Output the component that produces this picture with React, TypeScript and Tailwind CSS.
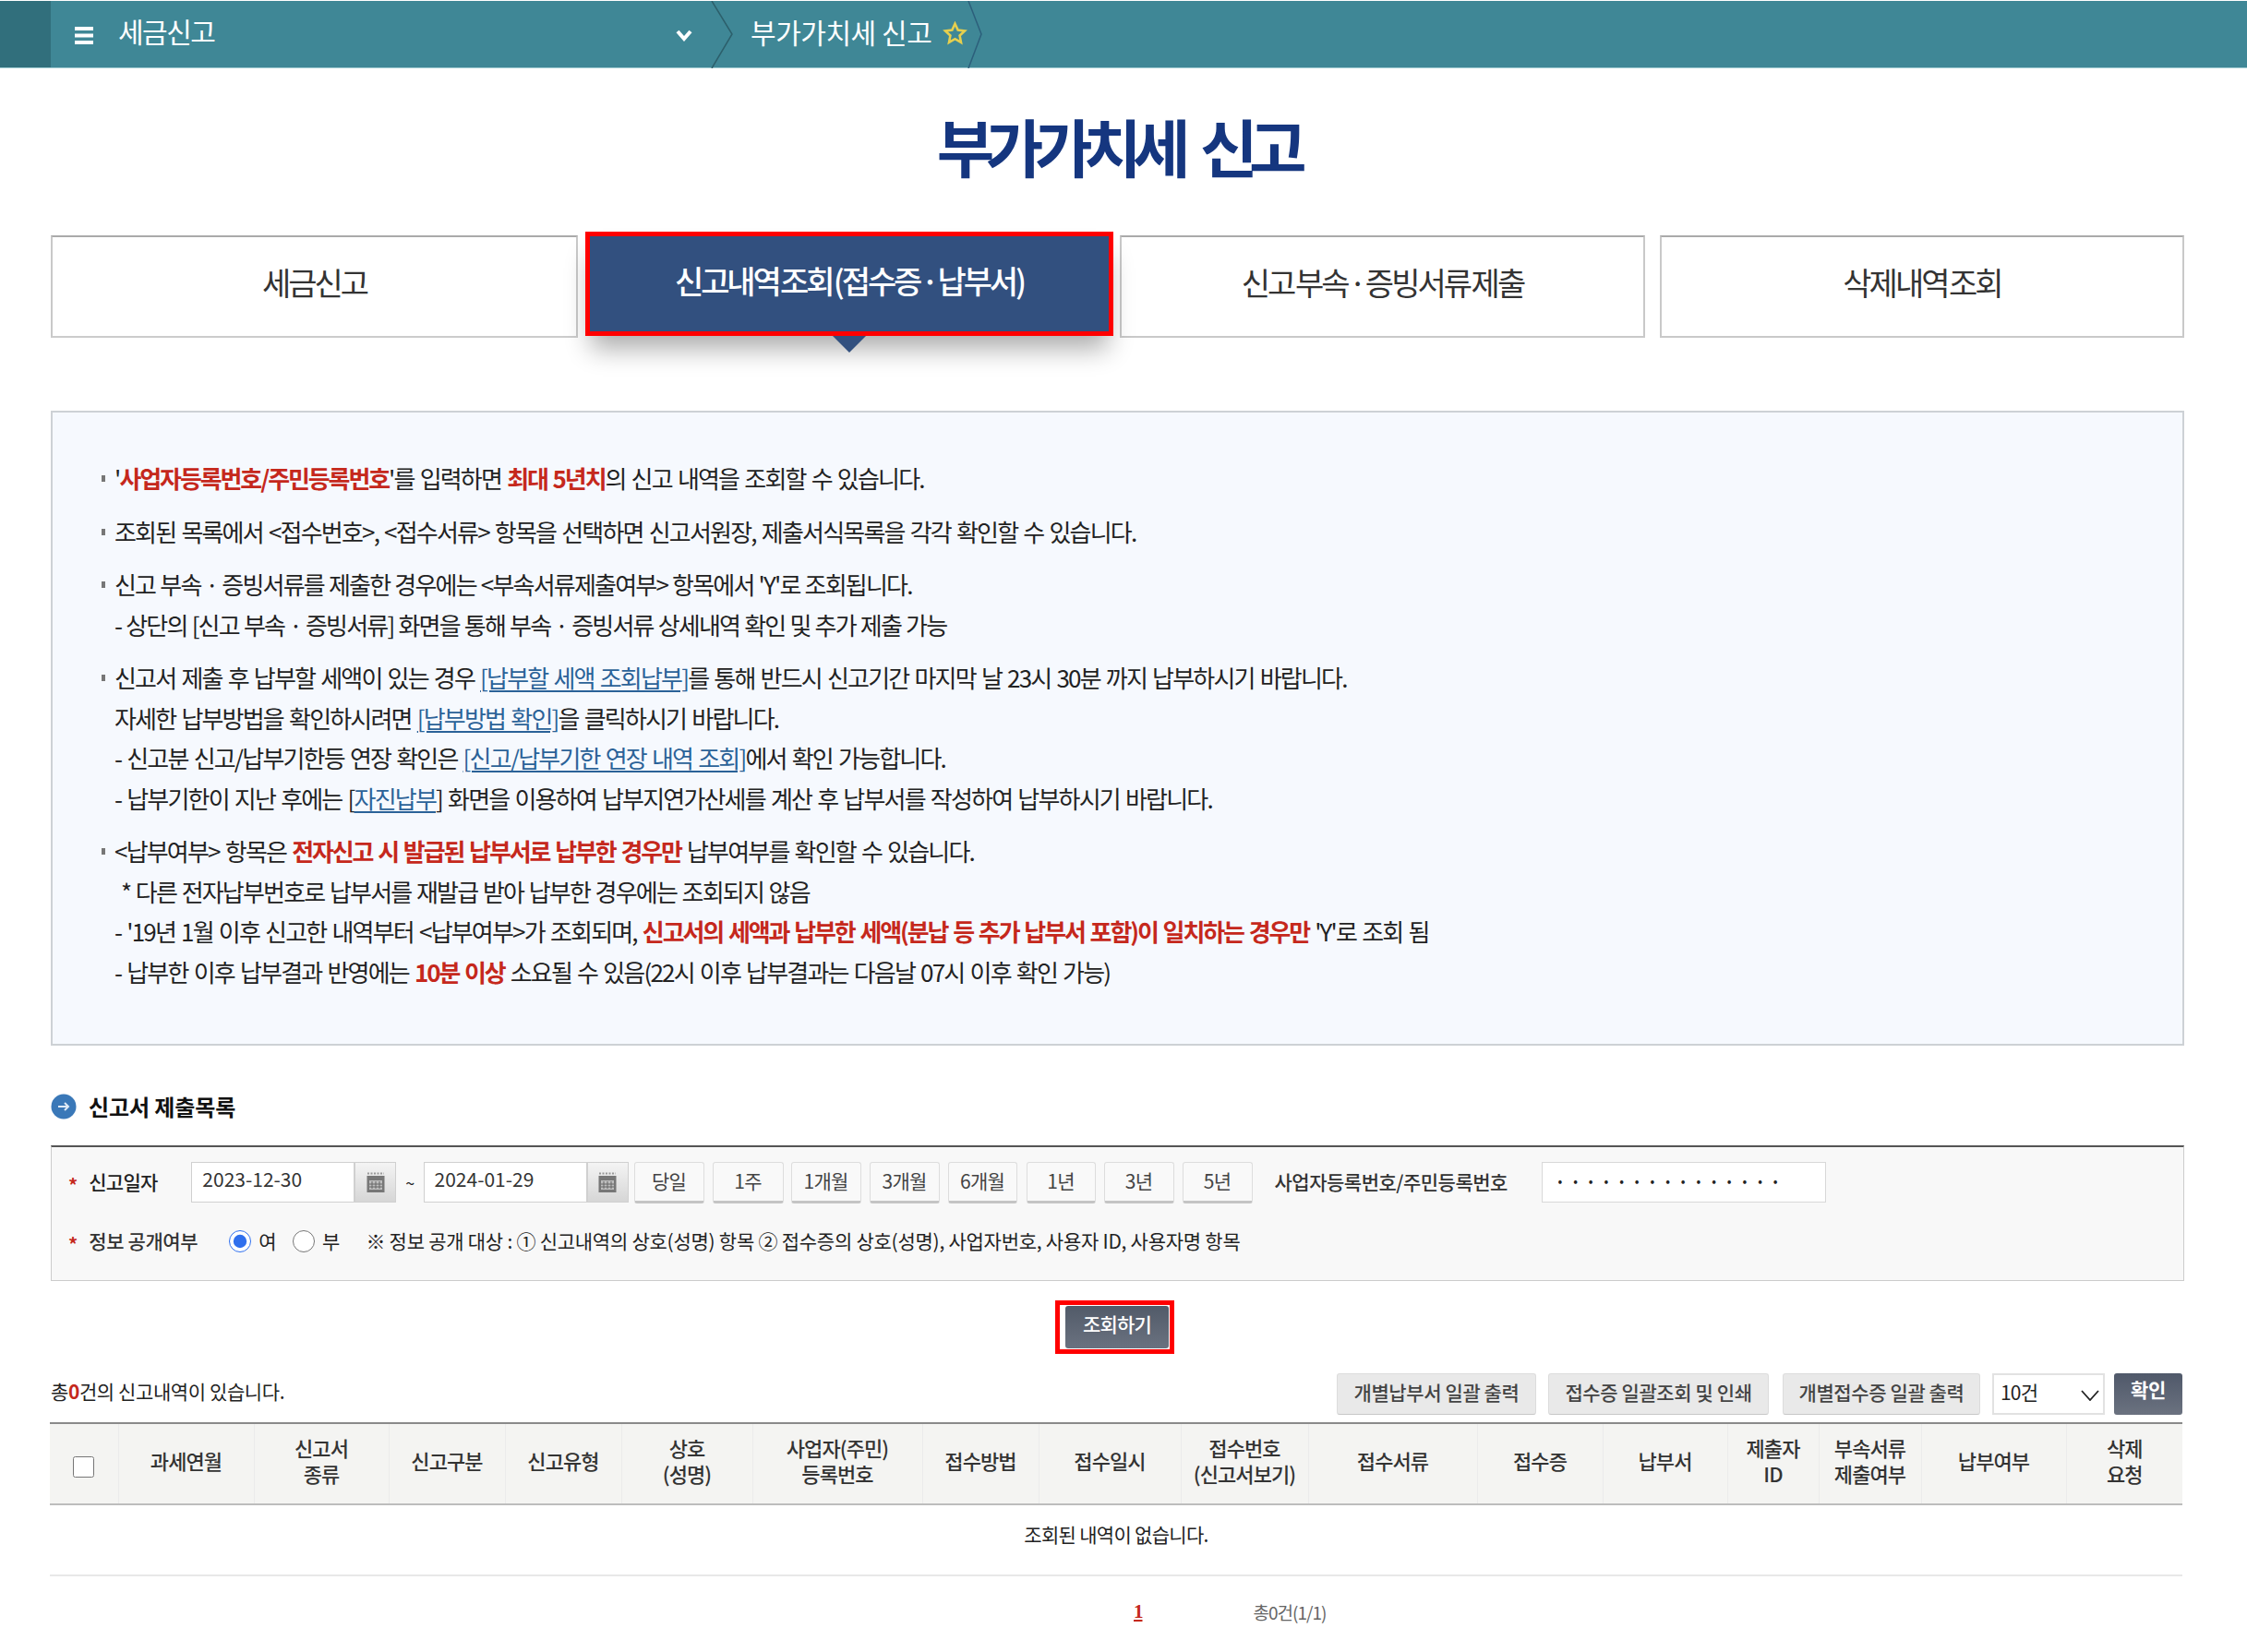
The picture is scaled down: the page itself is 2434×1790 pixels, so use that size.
import React from "react";

const Red = ({ children }: { children: React.ReactNode }) => (
  <span className="font-semibold tracking-[-2.100px] text-[#c5281c]">{children}</span>
);
const A = ({ children }: { children: React.ReactNode }) => (
  <a className="text-[#2b6298] underline decoration-2 underline-offset-[3px]">{children}</a>
);
const Bullet = () => <span className="absolute left-[-14px] top-[19px] h-[7px] w-[4px] bg-[#777]" />;

const periods = [
  ["당일", "w-[76px] ml-[6px]"],
  ["1주", "w-[77px] ml-[9px]"],
  ["1개월", "w-[76px] ml-[8px]"],
  ["3개월", "w-[76px] ml-[9px]"],
  ["6개월", "w-[75px] ml-[9px]"],
  ["1년", "w-[75px] ml-[10px]"],
  ["3년", "w-[76px] ml-[9px]"],
  ["5년", "w-[76px] ml-[9px]"],
];

const columns: [React.ReactNode, string][] = [
  ["과세연월", "w-[147px]"],
  [<>신고서<br />종류</>, "w-[146px]"],
  ["신고구분", "w-[126px]"],
  ["신고유형", "w-[126px]"],
  [<>상호<br />(성명)</>, "w-[142px]"],
  [<>사업자(주민)<br />등록번호</>, "w-[184px]"],
  ["접수방법", "w-[126px]"],
  ["접수일시", "w-[154px]"],
  [<>접수번호<br />(신고서보기)</>, "w-[138px]"],
  ["접수서류", "w-[183px]"],
  ["접수증", "w-[136px]"],
  ["납부서", "w-[135px]"],
  [<>제출자<br />ID</>, "w-[99px]"],
  [<>부속서류<br />제출여부</>, "w-[111px]"],
  ["납부여부", "w-[157px]"],
  [<>삭제<br />요청</>, "w-[126px]"],
];

const Calendar = () => (
  <div className="flex h-[44px] w-[45px] items-center justify-center border border-[#d0d0d0] bg-gradient-to-b from-[#f4f4f4] to-[#d6d6d6]">
    <svg width="20" height="23" viewBox="0 0 20 23">
      <rect x="0.5" y="4" width="19" height="18" fill="#777" />
      <rect x="3" y="9" width="14" height="10" fill="#bdbdbd" />
      <path d="M1 1.5h18" stroke="#999" strokeWidth="2" strokeDasharray="2 1.5" />
      <path d="M3 13h14M3 16h14M6 10v8M10 10v8M14 10v8" stroke="#666" strokeWidth="1" />
    </svg>
  </div>
);

const Star = () => <span className="mr-[13px] mt-[5px] text-[20px] font-bold leading-none text-[#c5281c]">*</span>;

export default function App() {
  return (
    <div className="min-h-[1790px] w-[2434px] bg-white font-['Noto_Sans_CJK_KR','Noto_Sans',sans-serif] text-[#222]">
      {/* top bar */}
      <header className="mt-px flex h-[73px] items-stretch border-b border-[#9cc9cf] bg-[#3f8796] text-white">
        <div className="w-[55px] bg-[#316f7c]" />
        <div className="flex w-[715px] items-center pl-[26px]">
          <svg width="20" height="19" viewBox="0 0 20 19" className="mt-[2px]">
            <path d="M0 2h20M0 9.500h20M0 17h20" stroke="#fff" strokeWidth="4" />
          </svg>
          <span className="ml-[27px] mt-[-8px] text-[30px] tracking-[-1.5px]">세금신고</span>
          <svg width="18" height="13" viewBox="0 0 18 13" className="ml-auto mr-[20px] mt-[3px]">
            <path d="M2 2l7 8 7-8" fill="none" stroke="#fff" strokeWidth="4" />
          </svg>
        </div>
        <svg width="24" height="73" viewBox="0 0 24 73" className="shrink-0">
          <path d="M1 0l22 36L1 73" fill="none" stroke="#2c5f6b" strokeWidth="1.500" />
        </svg>
        <div className="flex items-center pl-[19px]">
          <span className="mt-[-5px] text-[30px] tracking-[-0.45px]">부가가치세 신고</span>
          <svg width="27" height="26" viewBox="0 0 24 24" className="ml-[12px] mt-[-2px]">
            <path d="M12 2.500l2.900 6.300 6.800.8-5 4.700 1.300 6.800-6-3.400-6 3.400 1.300-6.800-5-4.700 6.800-.8z" fill="none" stroke="#e6cf4e" strokeWidth="2.400" />
          </svg>
        </div>
        <svg width="16" height="73" viewBox="0 0 16 73" className="shrink-0">
          <path d="M1 0l14 36L1 73" fill="none" stroke="#2c5f7b" strokeWidth="1.500" />
        </svg>
      </header>

      <main className="pl-[55px]">
        <h1 className="mt-[40px] w-[2311px] text-center text-[68px] font-bold leading-[88px] tracking-[-9.500px] [word-spacing:14px] text-[#15367f]">
          부가가치세 신고
        </h1>

        {/* tabs */}
        <div className="mt-[49px] flex items-start text-[34px] tracking-[-3px] [word-spacing:-3px] text-[#333]">
          <div className="mt-[4px] flex h-[111px] w-[571px] items-center justify-center border-2 border-[#c9c9c9] border-t-[#aaa] border-b-[#ccc] pb-[10px]">세금신고</div>
          <div className="relative ml-[8px] flex h-[113px] w-[572px] items-center justify-center border-[5px] border-[#ff0000] bg-[#32507f] pb-[8px] font-medium tracking-[-3.150px] text-white shadow-[0_20px_26px_-6px_rgba(0,0,0,0.32)]">
            신고내역 조회 (접수증 · 납부서)
            <span className="absolute left-[263px] top-[108px] h-0 w-0 border-x-[18px] border-t-[18px] border-x-transparent border-t-[#32507f]" />
          </div>
          <div className="ml-[7px] mt-[4px] flex h-[111px] w-[569px] items-center justify-center border-2 border-[#c9c9c9] border-t-[#aaa] pb-[10px]">신고 부속 · 증빙서류 제출</div>
          <div className="ml-[16px] mt-[4px] flex h-[111px] w-[568px] items-center justify-center border-2 border-[#c9c9c9] border-t-[#aaa] pb-[10px]">삭제내역 조회</div>
        </div>

        {/* notice */}
        <section className="mt-[79px] h-[688px] w-[2311px] border-2 border-[#cdd1d5] bg-[#f6f9fe] pl-[67px] pt-[49px] text-[26px] leading-[43.5px] tracking-[-1.800px] [word-spacing:2px] text-[#222]">
          <p className="relative"><Bullet />'<Red>사업자등록번호/주민등록번호</Red>'를 입력하면 <Red>최대 5년치</Red>의 신고 내역을 조회할 수 있습니다.</p>
          <p className="relative mt-[14px]"><Bullet />조회된 목록에서 &lt;접수번호&gt;, &lt;접수서류&gt; 항목을 선택하면 신고서원장, 제출서식목록을 각각 확인할 수 있습니다.</p>
          <p className="relative mt-[14px] [word-spacing:1px]"><Bullet />신고 부속 · 증빙서류를 제출한 경우에는 &lt;부속서류제출여부&gt; 항목에서 'Y'로 조회됩니다.</p>
          <p className="[word-spacing:1px]">- 상단의 [신고 부속 · 증빙서류] 화면을 통해 부속 · 증빙서류 상세내역 확인 및 추가 제출 가능</p>
          <p className="relative mt-[14px]"><Bullet />신고서 제출 후 납부할 세액이 있는 경우 <A>[납부할 세액 조회납부]</A>를 통해 반드시 신고기간 마지막 날 23시 30분 까지 납부하시기 바랍니다.</p>
          <p>자세한 납부방법을 확인하시려면 <A>[납부방법 확인]</A>을 클릭하시기 바랍니다.</p>
          <p>- 신고분 신고/납부기한등 연장 확인은 <A>[신고/납부기한 연장 내역 조회]</A>에서 확인 가능합니다.</p>
          <p>- 납부기한이 지난 후에는 [<A>자진납부</A>] 화면을 이용하여 납부지연가산세를 계산 후 납부서를 작성하여 납부하시기 바랍니다.</p>
          <p className="relative mt-[14px]"><Bullet />&lt;납부여부&gt; 항목은 <Red>전자신고 시 발급된 납부서로 납부한 경우만</Red> 납부여부를 확인할 수 있습니다.</p>
          <p className="pl-[7px] [word-spacing:1.500px]">* 다른 전자납부번호로 납부서를 재발급 받아 납부한 경우에는 조회되지 않음</p>
          <p>- '19년 1월 이후 신고한 내역부터 &lt;납부여부&gt;가 조회되며, <Red>신고서의 세액과 납부한 세액(분납 등 추가 납부서 포함)이 일치하는 경우만</Red> 'Y'로 조회 됨</p>
          <p>- 납부한 이후 납부결과 반영에는 <Red>10분 이상</Red> 소요될 수 있음(22시 이후 납부결과는 다음날 07시 이후 확인 가능)</p>
        </section>

        {/* section heading */}
        <div className="mt-[51px] flex h-[30px] items-center">
          <svg width="28" height="28" viewBox="0 0 28 28">
            <circle cx="14" cy="14" r="13.500" fill="#3a78b8" />
            <path d="M8 14h11M15 10l4 4-4 4" fill="none" stroke="#dfeaf6" strokeWidth="2" />
          </svg>
          <h2 className="ml-[13px] text-[24px] font-bold tracking-[-0.1px] text-[#111]">신고서 제출목록</h2>
        </div>

        {/* search */}
        <section className="mt-[27px] h-[147px] w-[2311px] border border-t-2 border-[#ccc] border-t-[#555] bg-[#f8f8f8] pl-[18px] pt-[15px] text-[21px] tracking-[-0.8px]">
          <div className="flex h-[46px] items-center">
            <Star />
            <span className="w-[111px] font-medium">신고일자</span>
            <div className="flex h-[44px] w-[177px] items-center border border-[#d0d0d0] bg-white pl-[11px] pb-[6px] tracking-[0px] text-[#333]">2023-12-30</div>
            <Calendar />
            <span className="mx-[10px] text-[18px]">~</span>
            <div className="flex h-[44px] w-[177px] items-center border border-[#d0d0d0] bg-white pl-[11px] pb-[6px] tracking-[0px] text-[#333]">2024-01-29</div>
            <Calendar />
            {periods.map(([label, cls]) => (
              <button key={label} className={`${cls} h-[45px] rounded-[3px] border border-[#ddd] border-b-[3px] border-b-[#c4c4c4] bg-[#f9f9f9] text-[#444]`}>
                {label}
              </button>
            ))}
            <span className="ml-[24px] w-[289px] font-medium tracking-[-0.5px] text-[#333]">사업자등록번호/주민등록번호</span>
            <input
              type="password"
              readOnly
              value="123456789012345"
              className="h-[44px] w-[308px] border border-[#d8d8d8] bg-white pb-[5px] pl-[17px] text-[14px] tracking-[11.900px] text-[#222]"
            />
          </div>
          <div className="mt-[26px] flex h-[30px] items-center">
            <Star />
            <span className="w-[152px] font-medium tracking-[-0.4px] text-[#333]">정보 공개여부</span>
            <input type="radio" name="open" defaultChecked className="m-0 h-[24px] w-[24px] accent-[#2f6fed]" />
            <span className="ml-[8px]">여</span>
            <input type="radio" name="open" className="m-0 ml-[18px] h-[24px] w-[24px]" />
            <span className="ml-[8px]">부</span>
            <span className="ml-[29px] tracking-[-0.25px] text-[#222]">※ 정보 공개 대상 : ① 신고내역의 상호(성명) 항목 ② 접수증의 상호(성명), 사업자번호, 사용자 ID, 사용자명 항목</span>
          </div>
        </section>

        {/* search button */}
        <div className="mt-[21px] flex w-[2305px] justify-center">
          <div className="border-[5px] border-[#ff0000] pl-[6px] pr-px py-px">
            <button className="h-[46px] w-[112px] rounded-[3px] bg-gradient-to-b from-[#525b69] to-[#6a7280] pb-[6px] text-[21px] font-medium tracking-[-0.8px] text-white">
              조회하기
            </button>
          </div>
        </div>

        {/* list toolbar */}
        <div className="mt-[20px] flex h-[46px] w-[2309px] items-center text-[21px] tracking-[-0.4px]">
          <span className="mt-[-4px]">총<b className="font-bold text-[#c5281c]">0</b>건의 신고내역이 있습니다.</span>
          <button className="ml-auto h-[45px] w-[216px] rounded-[3px] border border-[#dcdcdc] border-b-[#c8c8c8] bg-[#e9e9e9] pb-[3px] font-medium text-[#444]">개별납부서 일괄 출력</button>
          <button className="ml-[13px] h-[45px] w-[239px] rounded-[3px] border border-[#dcdcdc] border-b-[#c8c8c8] bg-[#e9e9e9] pb-[3px] font-medium text-[#444]">접수증 일괄조회 및 인쇄</button>
          <button className="ml-[15px] h-[45px] w-[214px] rounded-[3px] border border-[#dcdcdc] border-b-[#c8c8c8] bg-[#e9e9e9] pb-[3px] font-medium text-[#444]">개별접수증 일괄 출력</button>
          <div className="relative ml-[13px] h-[45px] w-[122px]">
            <select defaultValue="10건" className="h-[45px] w-[122px] appearance-none border-2 border-[#e2e2e2] bg-white pb-[2px] pl-[7px] tracking-[-0.8px] text-[#222]">
              <option>10건</option>
            </select>
            <svg width="20" height="12" viewBox="0 0 20 12" className="pointer-events-none absolute right-[6px] top-[18px]">
              <path d="M1 1l9 10 9-10" fill="none" stroke="#222" strokeWidth="1.800" />
            </svg>
          </div>
          <button className="ml-[10px] h-[45px] w-[74px] rounded-[3px] bg-gradient-to-b from-[#50596a] to-[#6b7280] pb-[8px] font-bold text-white">확인</button>
        </div>

        {/* table */}
        <table className="ml-[-1px] mt-[8px] w-[2310px] table-fixed border-collapse text-center">
          <colgroup>
            <col className="w-[74px]" />
            {columns.map(([, w], i) => (
              <col key={i} className={w} />
            ))}
          </colgroup>
          <thead>
            <tr className="h-[88px] border-y-2 border-t-[#8a8a8a] border-b-[#bdbdbd] bg-[#f4f4f2] text-[22px] leading-[28px] tracking-[-0.9px] text-[#333]">
              <th className="border-r border-[#ebebeb] font-normal">
                <input type="checkbox" className="m-0 h-[23px] w-[23px] align-middle" />
              </th>
              {columns.map(([label], i) => (
                <th key={i} className="border-r border-[#ebebeb] pb-[8px] font-medium last:border-r-0">{label}</th>
              ))}
            </tr>
          </thead>
          <tbody>
            <tr className="h-[77px] border-b-2 border-[#e8e8e8]">
              <td colSpan={17} className="pb-[12px] text-[21px] tracking-[-0.7px] text-[#222]">조회된 내역이 없습니다.</td>
            </tr>
          </tbody>
        </table>

        {/* pager */}
        <div className="mt-[24px] flex h-[30px] items-center pl-[1173px] tracking-[-1px]">
          <a className="font-['Liberation_Serif',serif] text-[21px] font-bold text-[#c5281c] underline underline-offset-2">1</a>
          <span className="ml-[120px] text-[19px] text-[#666]">총0건(1/1)</span>
        </div>
      </main>
    </div>
  );
}
